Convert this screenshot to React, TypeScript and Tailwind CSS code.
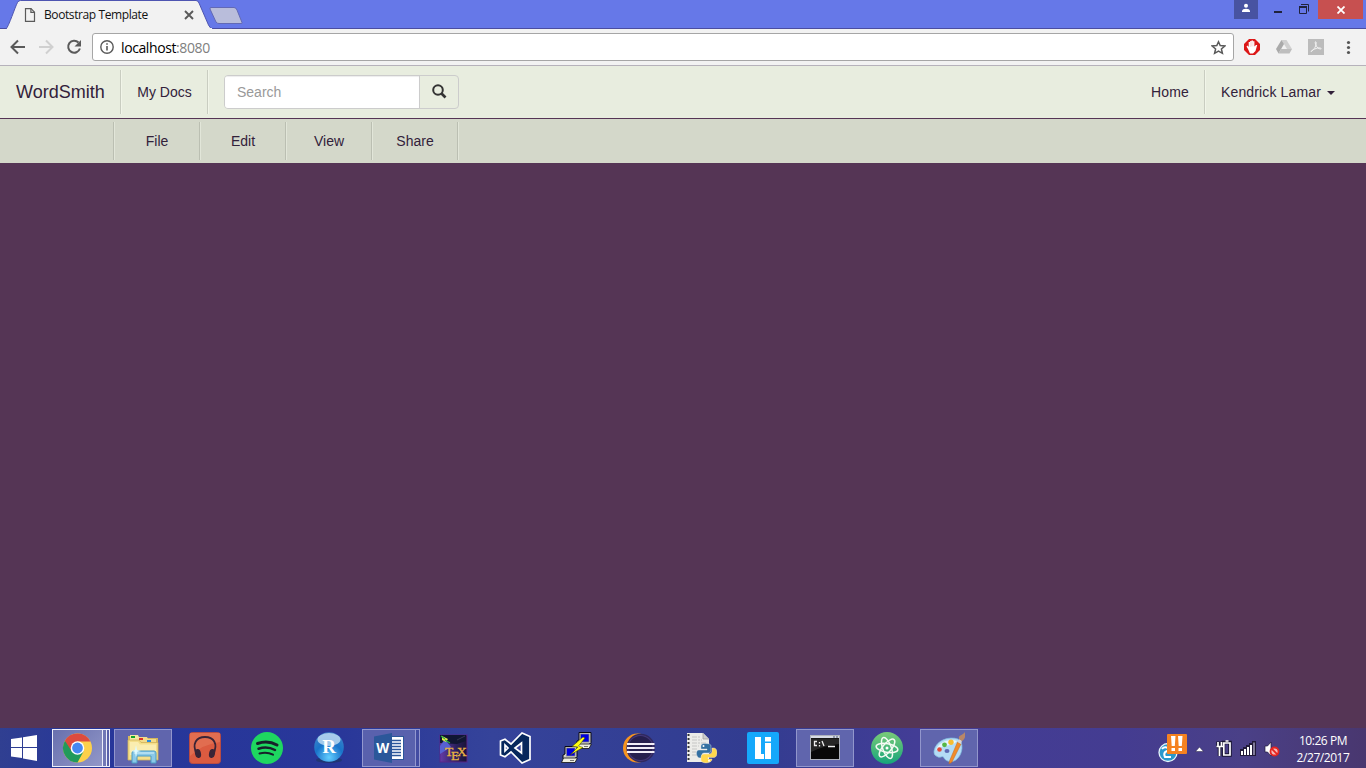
import React from "react";

const ui = "font-['Open_Sans','Noto_Sans',sans-serif]";

function Divider({ className = "" }: { className?: string }) {
  return <div className={`w-[2px] shrink-0 border-l border-[#c9cdc1] bg-[#f1f5e9] ${className}`} />;
}

function TitleBar() {
  return (
    <div className="relative flex h-[29px] justify-between bg-[#6678e8]">
      <svg className="absolute left-0 top-0" width="1366" height="29" viewBox="0 0 1366 29">
        <path d="M0 28.5H1366" stroke="#4b4da0" />
        <path d="M6 29C9 26 15 7 17.500 2.500Q18.500 .5 20.500 .5H196Q198 .5 199 3L208.500 25Q210 28.500 213 29Z" fill="#f2f2f2" stroke="#4e55b1" />
        <path d="M7 28.500H212" stroke="#f2f2f2" />
        <path d="M211 7.500H234Q236 7.500 237 10L242 22.500Q242.500 23.500 241 23.500H219Q217 23.500 216 22L210 9Q209.500 7.500 211 7.500Z" fill="#b9bddb" stroke="#6269b5" />
      </svg>
      <div className="relative flex h-[29px] w-[210px] items-center">
        <svg className="ml-6" width="12" height="16" viewBox="0 0 12 16" fill="none" stroke="#5a5a5a" strokeWidth="1.200">
          <path d="M1.500 1.600H7L10.500 5.200V14.400H1.500Z" /><path d="M6.900 1.600V5.300H10.500" />
        </svg>
        <span className={`ml-2 w-[140px] whitespace-nowrap text-[12px] tracking-[-0.4px] text-[#111] ${ui}`}>Bootstrap Template</span>
        <svg width="10" height="10" viewBox="0 0 10 10" stroke="#5a5a5a" strokeWidth="1.900"><path d="M1 1L9 9M9 1L1 9" /></svg>
      </div>
      <div className="relative flex h-[19px]">
        <div className="flex w-6 items-start justify-center bg-[#4853a1] pt-[3px]">
          <svg width="10" height="10" viewBox="0 0 10 10" fill="#fff"><circle cx="5" cy="2.700" r="2" /><path d="M1 9V7.500Q1.500 6 5 5.700Q8.500 6 9 7.500V9Z" /></svg>
        </div>
        <svg className="ml-2" width="52" height="19" viewBox="0 0 52 19" fill="none" stroke="#20233d">
          <path d="M8 12H16" strokeWidth="2" />
          <path d="M33.500 6.500H40.500V13.500H33.500Z" /><path d="M33 7H41" strokeWidth="2" /><path d="M35 4.500H42.500V11.500" />
        </svg>
        <div className="flex w-[45px] items-center justify-center bg-[#c75050]">
          <svg width="8" height="8" viewBox="0 0 8 8" stroke="#fff" strokeWidth="1.800"><path d="M.5 .5L7.500 7.500M7.500 .5L.5 7.500" /></svg>
        </div>
        <div className="w-[3px]" />
      </div>
    </div>
  );
}

function Toolbar() {
  return (
    <div className="flex h-[37px] items-center border-b border-[#b6b2bb] bg-[#f2f2f2]">
      <div className="flex w-[92px] items-center">
        <svg width="92" height="36" viewBox="0 0 92 36" fill="none" strokeWidth="2">
          <path d="M25 18H12M18 11.500L11.500 18L18 24.500" stroke="#5a5a5a" />
          <path d="M39 18H52M46 11.500L52.500 18L46 24.500" stroke="#d0d0d0" />
          <path d="M78.500 13.500A6 6 0 1 0 79.900 19.500" stroke="#5a5a5a" />
          <path d="M81 11V17.500H74.500Z" fill="#5a5a5a" />
        </svg>
      </div>
      <div className="flex h-7 w-[1142px] items-center rounded-[3px] border border-[#a6a6a6] bg-white">
        <svg className="ml-[7px]" width="14" height="14" viewBox="0 0 14 14" fill="none" stroke="#5a5a5a" strokeWidth="1.400">
          <circle cx="7" cy="7" r="6.200" /><path d="M7 6V10.500M7 3.300V4.800" strokeWidth="1.600" />
        </svg>
        <span className={`ml-[7px] grow text-[14px] tracking-[-0.4px] text-black ${ui}`}>localhost<span className="text-[#808080]">:8080</span></span>
        <svg className="mr-[7px]" width="15" height="15" viewBox="0 0 15 15" fill="none" stroke="#5a5a5a" strokeWidth="1.500"><path d="M7.500 1.800L9.200 5.600L13.800 6L10.400 9L11.400 13.300L7.500 11L3.600 13.300L4.600 9L1.200 6L5.800 5.600Z" /></svg>
      </div>
      <svg width="132" height="36" viewBox="1234 29 132 36">
        <path d="M1249 39H1255L1260 44V50L1255 55H1249L1244 50V44Z" fill="#dc1717" />
        <path d="M1248 49L1246.500 46.500L1247.600 45.500L1248.700 47V42H1250.200V41H1251.500V40.500H1253V41.300H1254.400V46.500L1256 45H1257.200L1255.500 51L1253 53.500H1250Z" fill="#fff" />
        <path d="M1250.300 42V47M1251.700 41V46.500M1253 41.500V46.500" stroke="#eeaaaa" strokeWidth=".4" />
        <path d="M1281.500 40H1286.500L1292 49H1287Z" fill="#d0d0d0" /><path d="M1281.500 40L1276 49L1278.500 53.500L1284 44Z" fill="#aaa" /><path d="M1281 49H1292L1289.500 53.500H1278.500Z" fill="#bebebe" />
        <rect x="1308" y="39" width="16" height="16" fill="#bcbcbc" /><path d="M1311 51.500C1314 50 1317 45 1316 42C1314.500 40.500 1315 45.500 1318 48C1321 50 1322.500 48.500 1320 48C1317 47.500 1312 50 1311 51.500Z" fill="none" stroke="#f3f3f3" />
        <g fill="#555"><circle cx="1348.500" cy="42.500" r="1.600" /><circle cx="1348.500" cy="47.500" r="1.600" /><circle cx="1348.500" cy="52.500" r="1.600" /></g>
      </svg>
    </div>
  );
}

function SiteNav() {
  return (
    <nav className="flex h-[53px] border-b border-[#553555] bg-[#e8eddf] pt-1 text-sm text-[#32213a]">
      <a className="flex h-11 w-[120px] items-center pl-4 text-lg">WordSmith</a>
      <Divider className="h-11" />
      <a className="flex h-11 w-[85px] items-center justify-center">My Docs</a>
      <Divider className="h-11" />
      <div className="ml-[15px] mt-[5px] flex h-[34px] w-[235px] overflow-hidden rounded border border-[#ccc]">
        <div className="flex w-[195px] items-center border-r border-[#ccc] bg-white pl-3 text-[#999] shadow-[inset_0_1px_1px_rgba(0,0,0,0.075)]">Search</div>
        <div className="flex grow items-center justify-center pb-px">
          <svg width="15" height="15" viewBox="0 0 15 15" fill="none" stroke="#333"><circle cx="6" cy="6" r="4.800" strokeWidth="2" /><path d="M9.500 9.500L13.500 13.500" strokeWidth="2.600" /></svg>
        </div>
      </div>
      <a className="ml-auto flex h-11 w-[70px] items-center justify-end pr-[15px] tracking-[0.15px]">Home</a>
      <Divider className="h-11" />
      <a className="flex h-11 w-[160px] items-center pl-[15px]">
        <span className="tracking-[0.14px]">Kendrick Lamar</span>
        <svg className="ml-[6px] mt-[2px]" width="8" height="4" viewBox="0 0 8 4"><path d="M0 0H8L4 4Z" fill="#32213a" /></svg>
      </a>
    </nav>
  );
}

function DocMenu() {
  return (
    <nav className="flex h-11 bg-[#d4d8ca] pl-[113px] pt-[3px] text-sm text-[#32213a]">
      {["File", "Edit", "View", "Share"].map((label) => (
        <React.Fragment key={label}>
          <div className="h-[38px] w-[2px] border-l border-[#bbbfb2] bg-[#e2e6d9]" />
          <a className="flex h-[38px] w-[84px] items-center justify-center">{label}</a>
        </React.Fragment>
      ))}
      <div className="h-[38px] w-[2px] border-l border-[#bbbfb2] bg-[#e2e6d9]" />
    </nav>
  );
}

function Icon({ children }: { children: React.ReactNode }) {
  return <svg className="shrink-0" width="32" height="32" viewBox="0 0 32 32">{children}</svg>;
}

const ChromeIcon = () => (
  <Icon>
    <circle cx="15.500" cy="16" r="14.500" fill="#fcd04b" />
    <path d="M15.500 16L2.940 8.750A14.500 14.500 0 0 0 15.500 30.500L21.500 19.500Z" fill="#219a5b" />
    <path d="M15.500 9.500H28.500A14.500 14.500 0 0 0 2.940 8.750L9.500 19Z" fill="#dd4b3e" />
    <circle cx="15.500" cy="16" r="6.800" fill="#fff" /><circle cx="15.500" cy="16" r="5.400" fill="#4688f1" />
  </Icon>
);

const FolderIcon = () => (
  <Icon>
    <path d="M1 4H9L11 6H31V27H1Z" fill="#d5b75b" />
    <path d="M3 3H11L12 5H15V9H3Z" fill="#f5e7a2" /><path d="M12 5H20L21 7H29V12H12Z" fill="#f2dc8b" />
    <rect x="4" y="4" width="4" height="2" fill="#11a429" /><rect x="12" y="6" width="4" height="2" fill="#df3427" /><rect x="20" y="8" width="4" height="2" fill="#278be0" />
    <path d="M1 8H12L14 10.500H31V28H1Z" fill="#f4df8b" stroke="#cfb15b" strokeWidth=".8" />
    <path d="M3 10H11L13 12.500H29V23H3Z" fill="#faedb0" />
    <path d="M5 21Q5 19 7 19H27Q29 19 29 21V31H24V24H10V31H5Z" fill="#8ac9e8" stroke="#4a9cc5" /><path d="M7 21H27" stroke="#d6f2fc" />
    <path d="M9 13L10 18L14 19L10 20L9 26L8 20L4 19L8 18Z" fill="#dffaff" />
  </Icon>
);

const HeadphonesIcon = () => (
  <Icon>
    <rect x=".5" y=".5" width="31" height="31" rx="3" fill="#db5b40" stroke="#b94b43" />
    <path d="M1 1H31V10Q14 12 1 24Z" fill="#e47557" opacity=".7" />
    <path d="M8 23C2 11 8 5 16 5S30 11 24 23" fill="none" stroke="#3a2436" strokeWidth="1.800" />
    <ellipse cx="9" cy="21.500" rx="3" ry="4.500" fill="#3a2436" transform="rotate(-12 9 21.500)" /><ellipse cx="23" cy="21.500" rx="3" ry="4.500" fill="#3a2436" transform="rotate(12 23 21.500)" />
  </Icon>
);

const SpotifyIcon = () => (
  <Icon>
    <circle cx="16" cy="16" r="16" fill="#1ed760" />
    <g fill="none" stroke="#18202a" strokeLinecap="round"><path d="M6.500 11.500Q17 8 26 13" strokeWidth="3" /><path d="M7.500 16.700Q16.500 14 24 18" strokeWidth="2.500" /><path d="M8.500 21.500Q16 19.500 22 22.700" strokeWidth="2" /></g>
  </Icon>
);

const RIcon = () => (
  <Icon>
    <defs><radialGradient id="rs" cx=".5" cy=".85" r=".85"><stop stopColor="#62cdff" /><stop offset=".55" stopColor="#1974ca" /><stop offset="1" stopColor="#3f83c8" /></radialGradient></defs>
    <ellipse cx="16" cy="28" rx="13" ry="3" fill="#203675" /><circle cx="16" cy="15" r="14.800" fill="url(#rs)" /><ellipse cx="16" cy="7.500" rx="11.500" ry="6.500" fill="#cee6f6" opacity=".75" />
    <text x="16" y="21" textAnchor="middle" fontSize="19" fontWeight="bold" fontFamily="Liberation Serif, serif" fill="#fff">R</text>
  </Icon>
);

const WordIcon = () => (
  <Icon>
    <rect x="18" y="4.500" width="12.500" height="23" fill="#fff" stroke="#2b579a" />
    <path d="M18 8.500H28M18 11.500H28M18 14.500H28M18 17.500H28M18 20.500H28M18 23.500H28" stroke="#2b579a" strokeWidth="1.300" />
    <path d="M1 4.500L19 1V31L1 27.500Z" fill="#2b579a" />
    <text x="9.800" y="21" textAnchor="middle" fontSize="15" fontWeight="bold" fontFamily="Open Sans, sans-serif" fill="#fff" textLength="13" lengthAdjust="spacingAndGlyphs">W</text>
  </Icon>
);

const TexIcon = () => (
  <Icon>
    <defs><linearGradient id="tex" x2="1"><stop stopColor="#653ba6" /><stop offset=".6" stopColor="#29205d" /><stop offset="1" stopColor="#1a1336" /></linearGradient></defs>
    <rect x="3" y="3" width="27" height="27" fill="url(#tex)" stroke="#572689" /><path d="M3 3H29V9L20 12L3 11Z" fill="#101633" /><path d="M8 7L3 14V22L14 15Z" fill="#5661d2" /><path d="M5 4L11 7L9 10L5 8Z" fill="#e8e74a" /><path d="M4 4L8 7M8 8L13 11" stroke="#2bb346" strokeWidth="1.200" /><path d="M20 8L28 4" stroke="#45475d" strokeWidth=".7" />
    <g fontSize="13.500" fontFamily="Liberation Serif, serif" fill="#e9b443" stroke="#e9b443" strokeWidth=".3"><text x="8" y="24">T</text><text x="14" y="28">E</text><text x="20" y="24">X</text></g>
  </Icon>
);

const StudioIcon = () => (
  <Icon>
    <path fillRule="evenodd" d="M1.500 9L6 7.300L12 12L23 1L31 4.500V27.500L23 31L12 20L6 24.700L1.500 23ZM6 13V19L9 16ZM22.500 11L16 16L22.500 21Z" fill="#06275c" stroke="#fff" strokeWidth="1.700" />
  </Icon>
);

const PuttyIcon = () => (
  <Icon>
    {[[15, 0], [1, 14]].map(([x, y]) => (
      <g key={x} transform={`translate(${x} ${y})`}><path d="M3 .5H15V10.500L13 12.500H1V9L3 8Z" fill="#d0d0c8" stroke="#080912" /><rect x="4.500" y="2" width="8.500" height="8" fill="#0000dd" stroke="#888" strokeWidth=".7" /><path d="M1.500 12H15.500L13 16.500H-.5Z" fill="#efefdf" stroke="#111" strokeWidth=".8" /><path d="M8 14.500H12" stroke="#555" strokeWidth=".8" /></g>
    ))}
    <path d="M22 5L11 14.500L17 15L9 23L22 15.500L17.500 14L24 6Z" fill="#ffff12" stroke="#353500" strokeWidth=".5" />
  </Icon>
);

const EclipseIcon = () => (
  <Icon>
    <circle cx="14.500" cy="16" r="14.500" fill="#f79420" /><circle cx="17.700" cy="16" r="14.300" fill="#30295f" /><circle cx="17.500" cy="16" r="13" fill="#443779" /><circle cx="17.500" cy="16" r="12" fill="#261f4e" />
    <path d="M4 12H31.500M4 16H31.500M4 20H31.500" stroke="#f1edf8" strokeWidth="2" />
  </Icon>
);

const PythonIcon = () => (
  <Icon>
    <path d="M2 1H18L24 7V30H2Z" fill="#ecece9" /><path d="M18 1V7H24" fill="#ccc" stroke="#999" strokeWidth=".7" /><path d="M3.500 2V30" stroke="#303237" strokeWidth="2" strokeDasharray="2 2" /><path d="M7 5H16M7 8H17M7 11H21M7 14H14M7 17H12M7 20H11M7 23H12" stroke="#b7b7b7" strokeWidth=".7" strokeDasharray="5 1 2 1" />
    <path d="M21 11.500C15 11.500 16 13.500 16 17H22V18H14C10 18 11 26 15 26H17V23Q17 21 19 21H24Q26 21 26 18V14Q26 11.500 21 11.500Z" fill="#3470a2" stroke="#eee" strokeWidth=".4" />
    <path d="M27 16H29C33 16 33 25.500 29 25.500H23V27H27C27 32 16 32 16 28V25Q16 22 19 22H24Q27 22 27 19Z" fill="#ffd74d" stroke="#eee" strokeWidth=".4" /><circle cx="18.500" cy="14" r="1" fill="#fff" /><circle cx="24" cy="28.700" r="1" fill="#fff" />
  </Icon>
);

const LiIcon = () => (
  <Icon><rect width="32" height="32" rx="2" fill="#15a8fb" /><path d="M8 5H14V22H17V27H8ZM18 5H24V9.500H18ZM18 11H24V27H18Z" fill="#fff" /></Icon>
);

const TerminalIcon = () => (
  <Icon>
    <rect x="1.500" y="3.500" width="29" height="24" fill="#080808" stroke="#aeb2bd" /><path d="M2 4H30V6H2Z" fill="#d8dce6" /><path d="M24 5H26M27 5H29" stroke="#4d5874" /><path d="M2 6.500H30V12Q14 14 2 20Z" fill="#333" opacity=".7" />
    <path d="M8 9.500H5.500V13.500H8M10.500 10V11.500M10.500 13V14.500M13 9L15 14M19 14.500H26" fill="none" stroke="#eee" strokeWidth="1.300" />
  </Icon>
);

const AtomIcon = () => (
  <Icon>
    <defs><linearGradient id="atom" y2="1" x2="0"><stop stopColor="#7acb78" /><stop offset="1" stopColor="#16a57b" /></linearGradient></defs><circle cx="16" cy="16" r="16" fill="url(#atom)" />
    <g fill="none" stroke="#f4faf3" strokeWidth="1.500"><ellipse cx="16" cy="16" rx="4.300" ry="11" transform="rotate(-20 16 16)" /><ellipse cx="16" cy="16" rx="4.300" ry="11" transform="rotate(40 16 16)" /><ellipse cx="16" cy="16" rx="4.300" ry="11" transform="rotate(100 16 16)" /></g><circle cx="16" cy="16" r="1.500" fill="#fff" />
  </Icon>
);

const PaintIcon = () => (
  <Icon>
    <path d="M1 19C3 8 16 4 25 7C31 10 30 22 24 27C20 31 13 30 11 26C10 23 8 26 5 25Q0 23 1 19Z" fill="#b4dcf5" stroke="#80bde0" strokeWidth=".7" /><path d="M3 18C6 10 16 6 24 9C21 14 12 12 3 18Z" fill="#e6f6ff" /><ellipse cx="14" cy="19" rx="2.500" ry="2" fill="#5c69b3" />
    <circle cx="6.500" cy="17.500" r="2.300" fill="#e44a38" /><circle cx="11.500" cy="12.800" r="2.400" fill="#56b747" /><circle cx="18" cy="10.200" r="2.700" fill="#f5bd34" />
    <path d="M24.500 10L16.500 29L16 32L19 30L28 12Z" fill="#f18b28" stroke="#bf6924" strokeWidth=".5" /><path d="M24.500 10L26.500 7L29 8.500L28 12Z" fill="#d8d6d2" /><path d="M26 7C25 3 29 4 32 0C33 4 32 7 29 9Z" fill="#b98767" />
  </Icon>
);

const apps = [
  { name: "chrome", el: <ChromeIcon />, state: "active" },
  { name: "folder", el: <FolderIcon />, state: "open" },
  { name: "headphones", el: <HeadphonesIcon />, state: "" },
  { name: "spotify", el: <SpotifyIcon />, state: "" },
  { name: "r", el: <RIcon />, state: "" },
  { name: "word", el: <WordIcon />, state: "stack" },
  { name: "tex", el: <TexIcon />, state: "" },
  { name: "studio", el: <StudioIcon />, state: "" },
  { name: "putty", el: <PuttyIcon />, state: "" },
  { name: "eclipse", el: <EclipseIcon />, state: "" },
  { name: "python", el: <PythonIcon />, state: "" },
  { name: "li", el: <LiIcon />, state: "" },
  { name: "terminal", el: <TerminalIcon />, state: "open" },
  { name: "atom", el: <AtomIcon />, state: "" },
  { name: "paint", el: <PaintIcon />, state: "open" },
];

function TaskButton({ el, state }: { el: React.ReactNode; state: string }) {
  const center = "flex items-center justify-center";
  if (state === "active")
    return (
      <div className="flex h-[38px] w-[62px] pl-[2px]">
        <div className={`${center} w-[51px] border border-[#eceefa] bg-[linear-gradient(135deg,#6870ae,#9297c8)]`}>{el}</div>
        <div className="w-1 border-y border-r border-[#eceefa] bg-[#7077b6]" /><div className="w-[3px] border-y border-r border-[#eceefa] bg-[#5860aa]" />
      </div>
    );
  if (state === "stack")
    return (
      <div className="flex h-[38px] w-[62px] pl-[2px]">
        <div className={`${center} w-[54px] border border-[#9398cf] bg-[#5961ad]`}>{el}</div><div className="w-1 border-y border-r border-[#9398cf] bg-[#434ca2]" />
      </div>
    );
  return (
    <div className="flex h-[38px] w-[62px] px-[2px]">
      <div className={`${center} w-[58px] ${state === "open" ? "border border-[#9296cc] bg-[#6065ad]" : ""}`}>{el}</div>
    </div>
  );
}

function Taskbar() {
  return (
    <footer className="flex h-10 shrink-0 items-center bg-[linear-gradient(90deg,#303f91_0,#26369a_7%,#293799_25%,#35439a_36%,#323c90_55%,#433d96_67%,#443c91_82%,#4a4087_91%,#49376f_100%)]">
      <div className="flex w-[50px] pl-[10px]">
        <svg width="28" height="28" viewBox="0 0 28 28" fill="#fff"><path d="M1 5L12 3.500V13H1ZM13 3.300L27 1V13H13ZM1 14H12V24L1 22.500ZM13 14H27V27L13 24.500Z" /></svg>
      </div>
      {apps.map((app) => <TaskButton key={app.name} el={app.el} state={app.state} />)}
      <svg className="ml-auto" width="126" height="40" viewBox="1156 728 126 40">
        <circle cx="1168" cy="752.500" r="9" fill="#2998cc" stroke="#e8f5fa" strokeWidth="1.300" /><path d="M1162 749Q1165 745 1171 750Q1162 751 1165 757L1171 757" fill="none" stroke="#fff" strokeWidth="2" /><rect x="1167" y="734" width="20" height="20" rx="1" fill="#f58220" /><path d="M1171 736H1175.500L1174.800 746H1171.700ZM1171.500 748H1175V751H1171.500ZM1178 736H1182.500L1181.800 746H1178.700ZM1178.500 748H1182V751H1178.500Z" fill="#fff" />
        <path d="M1195.500 751.500L1199.500 747L1203.500 751.500Z" fill="#fff" stroke="#252141" strokeWidth=".5" />
        <g fill="none" stroke="#191630" strokeWidth="3.500"><path d="M1223.500 742.500H1230V755H1223.500Z" /><path d="M1218 741.500V746M1221.500 741.500V746M1216.500 746.500H1222.500M1219.500 747V756" /></g>
        <g fill="none" stroke="#fff" strokeWidth="1.700"><path d="M1223.800 743H1230V755H1223.800Z" /><path d="M1225.500 741H1228.500M1218 742V746M1221.500 742V746M1216.500 746.500H1223M1219.500 747V756" /></g>
        <path d="M1240 756V749H1243V747H1246V745H1249V743H1252V741H1256V756Z" fill="#211a39" />
        <path d="M1241 751H1243V755H1241ZM1244 749H1246V755H1244ZM1247 747H1249V755H1247ZM1250 745H1252V755H1250Z" fill="#fff" /><path d="M1254 742.500V755" stroke="#8c87a3" strokeWidth="1.800" />
        <path d="M1265 746H1267.500L1271 742V756L1267.500 752H1265Z" fill="#fff" stroke="#211a39" strokeWidth=".7" /><circle cx="1274.500" cy="751.500" r="4" fill="#f7b8b6" stroke="#e52420" strokeWidth="1.800" /><path d="M1271.700 748.700L1277.300 754.300" stroke="#e52420" strokeWidth="1.800" />
      </svg>
      <div className={`w-[84px] pr-[2px] text-center text-[12px] leading-[17px] tracking-[-0.45px] text-white ${ui}`}>
        <div className="pt-px">10:26 PM</div><div>2/27/2017</div>
      </div>
    </footer>
  );
}

export default function App() {
  return (
    <div className="flex h-[768px] w-[1366px] flex-col overflow-hidden bg-[#553555] font-['Liberation_Sans',Arial,sans-serif]">
      <TitleBar />
      <Toolbar />
      <SiteNav />
      <DocMenu />
      <main className="grow" />
      <Taskbar />
    </div>
  );
}
